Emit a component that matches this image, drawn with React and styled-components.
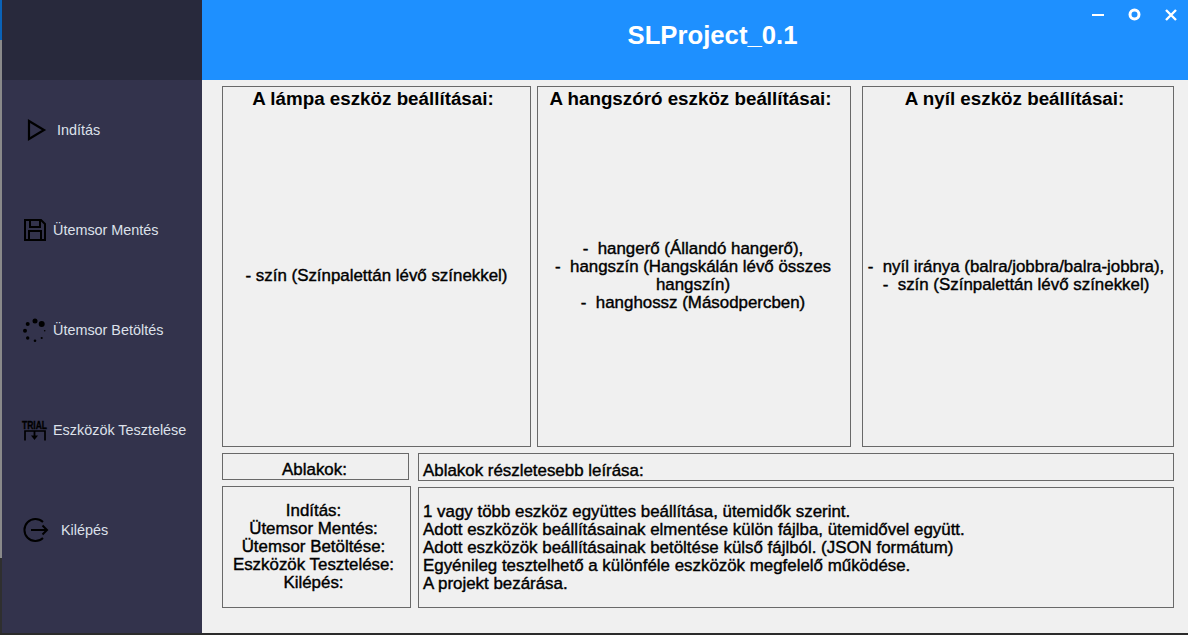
import React from "react";
import styled, { createGlobalStyle } from "styled-components";

const Global = createGlobalStyle`
  html, body { margin: 0; padding: 0; background: #f0f0f0; overflow: hidden; }
  * { box-sizing: border-box; }
`;
const Window = styled.div`
  width: 1188px; height: 635px; display: flex; flex-direction: column;
  font-family: "Liberation Sans", Arial, sans-serif; background: #f0f0f0; color: #000;
`;
const Body = styled.div`display: flex; flex: 1; min-height: 0;`;
const BottomEdge = styled.div`height: 2px; background: #2b2b2b;`;
const DesktopStrip = styled.div`
  width: 2px; flex: none;
  background: linear-gradient(to bottom, #0a62b8 0 40px, #8a8a8a 40px 558px, #2f2f2f 558px 100%);
`;
const Sidebar = styled.aside`
  width: 200px; flex: none; background: #33334c; display: flex; flex-direction: column;
`;
const Brand = styled.div`height: 80px; background: #28293c;`;
const Nav = styled.nav`display: flex; flex-direction: column;`;
const NavItem = styled.div`
  height: 100px; display: flex; align-items: center; gap: ${p => p.$gap}px; padding-left: ${p => p.$pad}px;
  font-size: 14.4px; color: #dde1ea;
  svg { flex: none; overflow: visible; }
`;
const Main = styled.main`flex: 1; display: flex; flex-direction: column; min-width: 0;`;
const Header = styled.header`
  height: 80px; background: #1e90ff; display: flex; align-items: center; justify-content: center; position: relative;
`;
const Title = styled.h1`margin: 0 0 9px 35px; color: #fff; font-size: 25.7px; font-weight: 700;`;
const Controls = styled.div`position: absolute; top: 8px; right: 11px; height: 13px; display: flex; gap: 24px; align-items: center;`;
const Content = styled.div`padding: 6px 14px 0 20px; display: flex; flex-direction: column;`;
const Row = styled.div`display: flex; align-items: flex-start;`;
const Panel = styled.section`
  border: 1px solid #696969; width: ${p => p.$w}px; height: ${p => p.$h}px; margin-left: ${p => p.$ml || 0}px;
  margin-top: ${p => p.$mt || 0}px; flex: none;
`;
const Card = styled(Panel)`display: flex; flex-direction: column; align-items: center; position: relative;`;
const CardTitle = styled.h2`
  margin: 2px 0 0; padding-right: 7px; font-size: 18.8px; line-height: 20px; font-weight: 700; text-align: center; white-space: nowrap;
`;
const CardText = styled.p`
  position: absolute; left: 0; right: 0; top: ${p => p.$top}px; margin: 0; padding: 0 ${p => p.$pr || 4}px 0 4px; text-align: center;
  font-size: 16.9px; line-height: 18px; font-weight: 400; -webkit-text-stroke: 0.4px #000; white-space: pre-wrap;
`;
const SideLabel = styled(Panel)`
  display: flex; flex-direction: column; align-items: center; justify-content: ${p => p.$end ? "flex-end" : "center"};
  font-size: 16.9px; line-height: 18px; -webkit-text-stroke: 0.4px #000; white-space: nowrap;
  padding-right: ${p => p.$pr || 0}px;
`;
const Describe = styled(Panel)`
  display: flex; flex-direction: column; justify-content: ${p => p.$end ? "flex-end" : "center"};
  padding-left: 4px; font-size: 16.9px; line-height: 18px; -webkit-text-stroke: 0.4px #000; white-space: nowrap;
`;

const PlayIcon = () => (
  <svg width="18" height="22" viewBox="0 0 18 22"><path d="M1 2 L16 11 L1 20 Z" fill="none" stroke="#000" strokeWidth="2.2"/></svg>
);
const SaveIcon = () => (
  <svg width="22" height="22" viewBox="0 0 22 22" fill="none" stroke="#000" strokeWidth="2">
    <path d="M1 1 H17 L21 5 V21 H1 Z"/><path d="M6 1 V8 H16 V1"/><path d="M5 21 V12 H17 V21"/>
  </svg>
);
const LoadIcon = () => (
  <svg width="22" height="25" viewBox="0 0 22 25" fill="#000">
    <circle cx="18.7" cy="6" r="3"/><circle cx="12" cy="3" r="2.5"/><circle cx="4.7" cy="6" r="2"/><circle cx="2" cy="12.7" r="2"/>
    <circle cx="4.7" cy="20" r="1.7"/><circle cx="12" cy="22.7" r="1.3"/><circle cx="18.7" cy="20" r="1.1"/><circle cx="21.7" cy="12.7" r="0.8"/>
  </svg>
);
const TrialIcon = () => (
  <svg width="25" height="22" viewBox="0 0 25 22" fill="#000">
    <text x="12.5" y="9.5" textAnchor="middle" fontSize="10.5" fontWeight="700" fontFamily="Liberation Sans, sans-serif" textLength="25" lengthAdjust="spacingAndGlyphs" stroke="#000" strokeWidth="0.3">TRIAL</text>
    <path d="M3 21.5 V12 H23 V21.5" stroke="#000" strokeWidth="1.7" fill="none"/>
    <path d="M12.5 12 V17.5" stroke="#000" strokeWidth="1.8" fill="none"/>
    <path d="M9 16.5 H16 L12.5 21 Z"/>
  </svg>
);
const ExitIcon = () => (
  <svg width="25" height="26" viewBox="0 0 25 26" fill="none" stroke="#000" strokeWidth="2">
    <path d="M20 5 A11 11 0 1 0 20 21"/><path d="M8 13 H24"/><path d="M19.5 8.5 L24 13 L19.5 17.5"/>
  </svg>
);
const MinIcon = () => <svg width="12" height="4" viewBox="0 0 12 4"><rect y="1" width="12" height="2" fill="#fff"/></svg>;
const MaxIcon = () => <svg width="13" height="13" viewBox="0 0 13 13"><circle cx="6.5" cy="6.5" r="4.5" fill="none" stroke="#fff" strokeWidth="3"/></svg>;
const CloseIcon = () => <svg width="12" height="12" viewBox="0 0 12 12"><path d="M1 1 L11 11 M11 1 L1 11" stroke="#fff" strokeWidth="2.4"/></svg>;

const items = [
  { label: "Indítás", Icon: PlayIcon, pad: 26, gap: 11 },
  { label: "Ütemsor Mentés", Icon: SaveIcon, pad: 22, gap: 7 },
  { label: "Ütemsor Betöltés", Icon: LoadIcon, pad: 21, gap: 8 },
  { label: "Eszközök Tesztelése", Icon: TrialIcon, pad: 20, gap: 6 },
  { label: "Kilépés", Icon: ExitIcon, pad: 21, gap: 13 },
];

export default function App() {
  return (
    <Window>
      <Global />
      <Body>
        <DesktopStrip />
        <Sidebar>
          <Brand />
          <Nav>
            {items.map(({ label, Icon, pad, gap }) => (
              <NavItem key={label} $pad={pad} $gap={gap}><Icon />{label}</NavItem>
            ))}
          </Nav>
        </Sidebar>
        <Main>
          <Header>
            <Title>SLProject_0.1</Title>
            <Controls><MinIcon /><MaxIcon /><CloseIcon /></Controls>
          </Header>
          <Content>
            <Row>
              <Card $w={309} $h={361}>
                <CardTitle>A lámpa eszköz beállításai:</CardTitle>
                <CardText $top={180}>- szín (Színpalettán lévő színekkel)</CardText>
              </Card>
              <Card $w={314} $h={361} $ml={6}>
                <CardTitle>A hangszóró eszköz beállításai:</CardTitle>
                <CardText $top={153} $pr={6}>{"-  hangerő (Állandó hangerő),\n-  hangszín (Hangskálán lévő összes hangszín)\n-  hanghossz (Másodpercben)"}</CardText>
              </Card>
              <Card $w={312} $h={361} $ml={11}>
                <CardTitle>A nyíl eszköz beállításai:</CardTitle>
                <CardText $top={171} $pr={8}>{"-  nyíl iránya (balra/jobbra/balra-jobbra),\n-  szín (Színpalettán lévő színekkel)"}</CardText>
              </Card>
            </Row>
            <Row>
              <SideLabel $w={187} $h={27} $mt={6} $pr={2} $end>Ablakok:</SideLabel>
              <Describe $w={756} $h={28} $mt={6} $ml={9} $end>Ablakok részletesebb leírása:</Describe>
            </Row>
            <Row>
              <SideLabel $w={189} $h={122} $mt={5} $pr={6}>
                <span>Indítás:</span><span>Ütemsor Mentés:</span><span>Ütemsor Betöltése:</span><span>Eszközök Tesztelése:</span><span>Kilépés:</span>
              </SideLabel>
              <Describe $w={756} $h={121} $mt={6} $ml={7}>
                <span>1 vagy több eszköz együttes beállítása, ütemidők szerint.</span>
                <span>Adott eszközök beállításainak elmentése külön fájlba, ütemidővel együtt.</span>
                <span>Adott eszközök beállításainak betöltése külső fájlból. (JSON formátum)</span>
                <span>Egyénileg tesztelhető a különféle eszközök megfelelő működése.</span>
                <span>A projekt bezárása.</span>
              </Describe>
            </Row>
          </Content>
        </Main>
      </Body>
      <BottomEdge />
    </Window>
  );
}
